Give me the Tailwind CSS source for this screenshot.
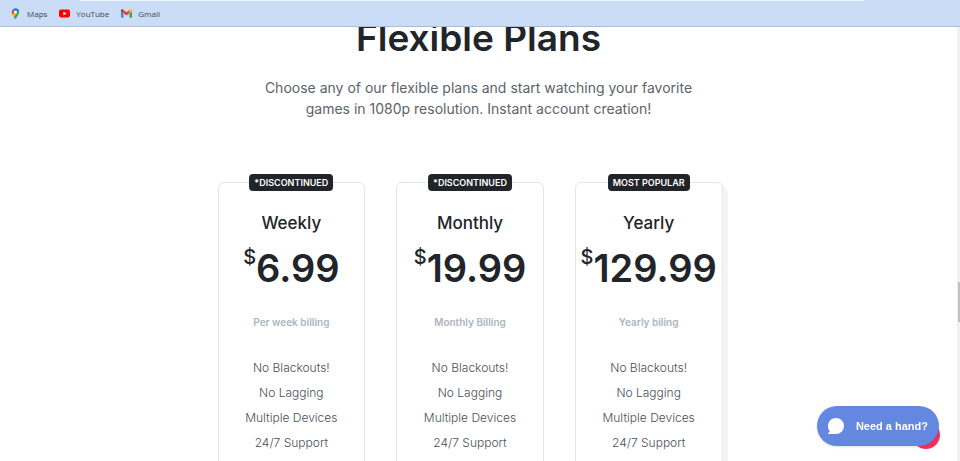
<!DOCTYPE html>
<html lang="en">
<head>
  <meta charset="UTF-8">
  <meta name="viewport" content="width=device-width, initial-scale=1.0">
  <title>Flexible Plans</title>
  <script src="https://cdn.jsdelivr.net/npm/@tailwindcss/browser@4"></script>
</head>
<body class="h-screen flex flex-col overflow-hidden bg-white text-[#212529] font-['Inter',sans-serif]">

  <!-- Bookmarks bar -->
  <header class="relative z-10 shrink-0 h-[27px] bg-[#cbdcf6] border-b border-[#a9bdd8]">
    <div class="h-px ml-20 mr-24 bg-[#edf3fd]"></div>
    <nav class="flex items-center gap-3 h-[25px] px-[10px] text-[8px] text-[#3c4654] font-['Open_Sans',sans-serif]">
      <a href="#" class="flex items-center gap-[6px]">
        <svg class="w-[11px] h-[11px]" viewBox="0 0 24 24">
          <path fill="#34a853" d="M12 24c-.8 0-1.200-.6-1.400-1.200C9.600 19.500 7.500 17.300 6 15l12.500-12A8 8 0 0 1 20 8.500c0 6-5 8-6.600 14.300-.2.700-.6 1.200-1.400 1.200z"/>
          <path fill="#fbbc04" d="M6 15l6-6 3 3-6.500 7z"/>
          <path fill="#ea4335" d="M4 9c0-2 .6-3.600 1.800-5L10 7 6 15C4.700 13 4 11 4 9z"/>
          <path fill="#1a73e8" d="M5.800 4A8 8 0 0 1 12 .5c3 0 5.500 1.500 7 4L13 9 9 7z"/>
          <circle cx="12" cy="8.500" r="3" fill="#fff"/>
        </svg>
        Maps
      </a>
      <a href="#" class="flex items-center gap-[6px]">
        <svg class="w-[11px] h-[11px]" viewBox="0 0 24 24">
          <rect x="0" y="3.500" width="24" height="17" rx="4" fill="#f00"/>
          <path fill="#fff" d="M9.500 8v8l7-4z"/>
        </svg>
        YouTube
      </a>
      <a href="#" class="flex items-center gap-[6px]">
        <svg class="w-[11px] h-[11px]" viewBox="0 0 24 24">
          <path fill="#4285f4" d="M1.600 21H5.500V11.500L0 7.400v12A1.600 1.600 0 0 0 1.600 21z"/>
          <path fill="#34a853" d="M18.500 21h3.900a1.600 1.600 0 0 0 1.600-1.600v-12l-5.500 4.100z"/>
          <path fill="#fbbc04" d="M18.500 4.600v6.900L24 7.400V5.200c0-2-2.300-3.200-3.900-1.900z"/>
          <path fill="#ea4335" d="M5.500 11.500V4.600L12 9.500l6.500-4.900v6.900L12 16.400z"/>
          <path fill="#c5221f" d="M0 5.200v2.200l5.500 4.100V4.600L3.900 3.300C2.300 2 0 3.200 0 5.200z"/>
        </svg>
        Gmail
      </a>
    </nav>
  </header>

  <div class="flex flex-1 min-h-0">
    <main class="flex-1 min-w-0">
      <section class="max-w-[522px] mx-auto -mt-[13px]">
        <div class="text-center">
          <h2 class="text-[37px] leading-[48px] font-semibold">Flexible Plans</h2>
          <p class="max-w-[450px] mx-auto mt-[15px] text-sm leading-[21px] text-[#5c636a]">
            Choose any of our flexible plans and start watching your favorite games in 1080p resolution. Instant account creation!
          </p>
        </div>

        <div class="grid grid-cols-3 gap-[31px] mt-[63px] pr-[17px] text-center">
          <article class="relative h-[360px] pt-7 bg-white border border-[#e4e6e8] rounded-md">
            <span class="absolute -top-[9px] left-1/2 -translate-x-1/2 px-[5px] rounded-sm bg-[#212529] text-white text-[9px] leading-[17px] font-semibold whitespace-nowrap">*DISCONTINUED</span>
            <h3 class="text-[17px] leading-6 font-medium">Weekly</h3>
            <div class="flex justify-center mt-[9px] leading-[48px]">
              <span class="text-xl leading-[26px] font-medium">$</span>
              <span class="text-[38px] font-semibold">6.99</span>
            </div>
            <p class="mt-[22px] text-[10px] leading-4 font-semibold text-[#adb5bd]">Per week billing</p>
            <ul class="mt-[25px] text-xs leading-[25px] font-light text-[#495057]">
              <li>No Blackouts!</li>
              <li>No Lagging</li>
              <li>Multiple Devices</li>
              <li>24/7 Support</li>
            </ul>
          </article>

          <article class="relative h-[360px] pt-7 bg-white border border-[#e4e6e8] rounded-md">
            <span class="absolute -top-[9px] left-1/2 -translate-x-1/2 px-[5px] rounded-sm bg-[#212529] text-white text-[9px] leading-[17px] font-semibold whitespace-nowrap">*DISCONTINUED</span>
            <h3 class="text-[17px] leading-6 font-medium">Monthly</h3>
            <div class="flex justify-center mt-[9px] leading-[48px]">
              <span class="text-xl leading-[26px] font-medium">$</span>
              <span class="text-[38px] font-semibold">19.99</span>
            </div>
            <p class="mt-[22px] text-[10px] leading-4 font-semibold text-[#adb5bd]">Monthly Billing</p>
            <ul class="mt-[25px] text-xs leading-[25px] font-light text-[#495057]">
              <li>No Blackouts!</li>
              <li>No Lagging</li>
              <li>Multiple Devices</li>
              <li>24/7 Support</li>
            </ul>
          </article>

          <article class="relative h-[360px] pt-7 bg-white border border-[#e4e6e8] rounded-md shadow-[5px_5px_0_#f4f4f5]">
            <span class="absolute -top-[9px] left-1/2 -translate-x-1/2 px-[5px] rounded-sm bg-[#212529] text-white text-[9px] leading-[17px] font-semibold whitespace-nowrap">MOST POPULAR</span>
            <h3 class="text-[17px] leading-6 font-medium">Yearly</h3>
            <div class="flex justify-center mt-[9px] leading-[48px]">
              <span class="text-xl leading-[26px] font-medium">$</span>
              <span class="text-[38px] font-semibold">129.99</span>
            </div>
            <p class="mt-[22px] text-[10px] leading-4 font-semibold text-[#adb5bd]">Yearly biling</p>
            <ul class="mt-[25px] text-xs leading-[25px] font-light text-[#495057]">
              <li>No Blackouts!</li>
              <li>No Lagging</li>
              <li>Multiple Devices</li>
              <li>24/7 Support</li>
            </ul>
          </article>
        </div>
      </section>
    </main>

    <!-- Scrollbar -->
    <div class="w-[3px] bg-[#f1f1f1]">
      <div class="h-10 mt-[255px] ml-px bg-[#c1c1c1]"></div>
    </div>
  </div>

  <!-- Chat launcher -->
  <div class="fixed right-5 bottom-3 size-7 rounded-full bg-[#f5305c]"></div>
  <button type="button" class="fixed right-[21px] bottom-[15px] flex items-center gap-3 h-10 px-[11px] rounded-full bg-[#6487e0] text-white text-[11px] font-bold shadow-sm font-['Liberation_Sans',sans-serif]">
    <svg class="w-4 h-4" viewBox="0 0 16 16" fill="currentColor">
      <path d="M8 0a8 8 0 1 1 0 16H.8c-.7 0-.9-.7-.4-1.100L1.900 13.200A8 8 0 0 1 8 0z"/>
    </svg>
    Need a hand?
  </button>
</body>
</html>
